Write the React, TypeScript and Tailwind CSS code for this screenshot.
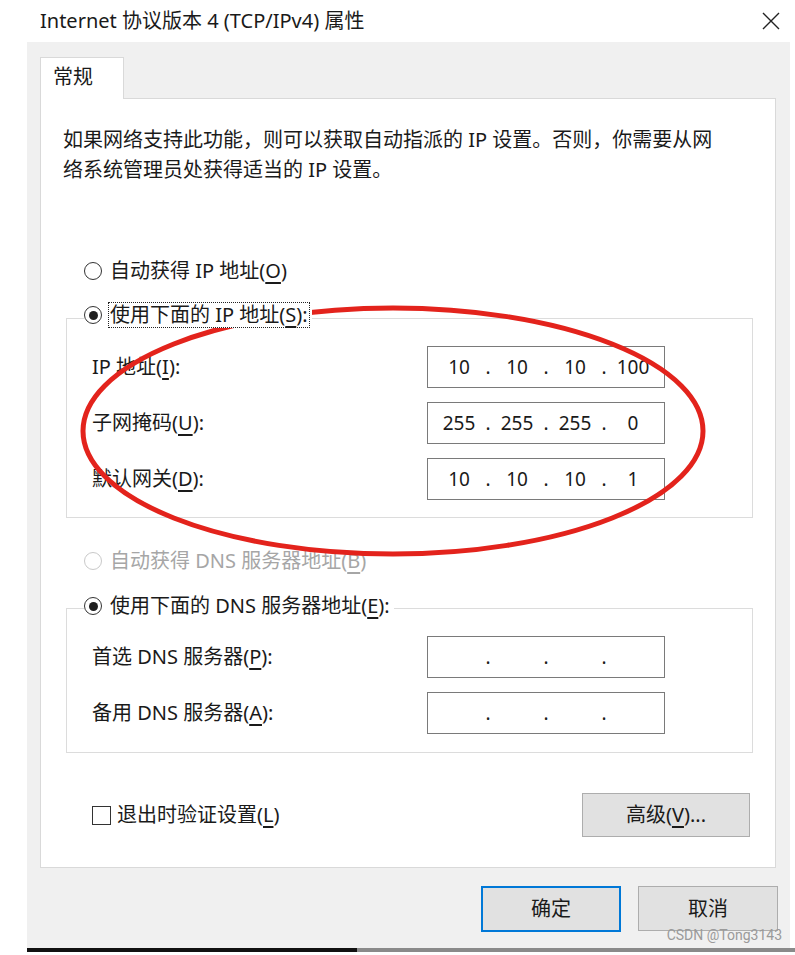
import React from "react";

const FONT = { fontFamily: '"Noto Sans", "Noto Sans CJK SC", sans-serif' };

function Radio({ checked, disabled }: { checked?: boolean; disabled?: boolean }) {
    return (
        <span
            className={`w-[18px] h-[18px] shrink-0 rounded-full border bg-white flex items-center justify-center ${
                disabled ? "border-[#c9c9c9]" : "border-[#333333]"
            }`}
        >
            {checked && <span className="w-[9px] h-[9px] rounded-full bg-[#1f1f1f]" />}
        </span>
    );
}

function IpBox({ parts }: { parts: string[] }) {
    return (
        <div className="w-[238px] h-[42px] border border-[#7a7a7a] bg-white flex items-center pl-[9px] text-[19px] text-[#1a1a1a] overflow-hidden">
            {parts.map((p, i) => (
                <React.Fragment key={i}>
                    {i > 0 && <span className="w-[14px] text-center">.</span>}
                    <span className="w-[44px] text-center">{p}</span>
                </React.Fragment>
            ))}
        </div>
    );
}

function Row({ label, hotkey, after, parts }: { label: string; hotkey: string; after?: string; parts: string[] }) {
    return (
        <div className="flex items-center h-[42px]">
            <div className="w-[360px] pl-[25px] text-[20px] text-[#1a1a1a]">
                {label}(<span className="underline underline-offset-4">{hotkey}</span>){after ?? ":"}
            </div>
            <IpBox parts={parts} />
        </div>
    );
}

export default function App() {
    return (
        <div className="w-[795px] h-[955px] bg-white relative overflow-hidden" style={FONT}>
            {/* title bar */}
            <div className="h-[42px] flex items-center justify-between pl-[40px] pr-[14px]">
                <span className="text-[20px] text-[#1a1a1a]">Internet 协议版本 4 (TCP/IPv4) 属性</span>
                <svg width="20" height="20" viewBox="0 0 20 20">
                    <path d="M2 2 L18 18 M18 2 L2 18" stroke="#222" strokeWidth="1.4" fill="none" />
                </svg>
            </div>

            {/* dialog body */}
            <div className="ml-[27px] w-[763px] h-[906px] bg-[#f0f0f0] pl-[13px] pt-[15px] relative">
                <div className="relative z-10 w-[84px] h-[42px] bg-white border border-b-0 border-[#d9d9d9] pl-[12px] pt-[4px] text-[20px] text-[#1a1a1a]">
                    常规
                </div>

                <div className="-mt-px w-[736px] h-[770px] bg-white border border-[#d9d9d9]">
                    <p className="pl-[22px] pt-[26px] text-[20px] leading-[30px] text-[#1a1a1a]">
                        如果网络支持此功能，则可以获取自动指派的 IP 设置。否则，你需要从网
                        <br />
                        络系统管理员处获得适当的 IP 设置。
                    </p>

                    <div className="mt-[73px] ml-[43px] h-[26px] flex items-center gap-[8px] text-[20px] text-[#1a1a1a]">
                        <Radio />
                        <span>
                            自动获得 IP 地址(<span className="underline underline-offset-4">O</span>)
                        </span>
                    </div>

                    <div className="mt-[18px] ml-[43px] relative z-10 w-fit h-[26px] flex items-center gap-[6px] bg-white pr-[2px] text-[20px] text-[#1a1a1a]">
                        <Radio checked />
                        <span className="border border-dotted border-[#222] px-[1px] leading-[24px]">
                            使用下面的 IP 地址(<span className="underline underline-offset-4">S</span>):
                        </span>
                    </div>

                    <div className="-mt-[10px] ml-[25px] w-[687px] h-[200px] border border-[#dcdcdc] pt-[27px] flex flex-col gap-[14px]">
                        <Row label="IP 地址" hotkey="I" parts={["10", "10", "10", "100"]} />
                        <Row label="子网掩码" hotkey="U" parts={["255", "255", "255", "0"]} />
                        <Row label="默认网关" hotkey="D" parts={["10", "10", "10", "1"]} />
                    </div>

                    <div className="mt-[30px] ml-[43px] h-[26px] flex items-center gap-[8px] text-[20px] text-[#a6a6a6]">
                        <Radio disabled />
                        <span>
                            自动获得 DNS 服务器地址(<span className="underline underline-offset-4">B</span>)
                        </span>
                    </div>

                    <div className="mt-[19px] ml-[43px] relative z-10 w-fit h-[26px] flex items-center gap-[8px] bg-white pr-[4px] text-[20px] text-[#1a1a1a]">
                        <Radio checked />
                        <span>
                            使用下面的 DNS 服务器地址(<span className="underline underline-offset-4">E</span>):
                        </span>
                    </div>

                    <div className="-mt-[11px] ml-[25px] w-[687px] h-[145px] border border-[#dcdcdc] pt-[27px] flex flex-col gap-[14px]">
                        <Row label="首选 DNS 服务器" hotkey="P" parts={["", "", "", ""]} />
                        <Row label="备用 DNS 服务器" hotkey="A" parts={["", "", "", ""]} />
                    </div>

                    <div className="mt-[40px] pl-[51px] pr-[25px] flex items-center justify-between">
                        <div className="flex items-center gap-[6px] text-[20px] text-[#1a1a1a]">
                            <span className="w-[19px] h-[19px] border border-[#333333] bg-white" />
                            <span>
                                退出时验证设置(<span className="underline underline-offset-4">L</span>)
                            </span>
                        </div>
                        <button className="w-[168px] h-[44px] bg-[#e1e1e1] border border-[#adadad] text-[20px] text-[#1a1a1a]">
                            高级(<span className="underline underline-offset-4">V</span>)...
                        </button>
                    </div>
                </div>

                {/* dialog buttons */}
                <div className="mt-[18px] pr-[12px] flex justify-end gap-[17px]">
                    <button className="w-[140px] h-[46px] bg-[#e1e1e1] border-2 border-[#0078d7] text-[20px] text-[#1a1a1a]">
                        确定
                    </button>
                    <button className="w-[140px] h-[45px] bg-[#e1e1e1] border border-[#adadad] text-[20px] text-[#1a1a1a]">
                        取消
                    </button>
                </div>

                <span className="absolute right-[8px] bottom-[2px] text-[14px] text-[#9a9a9a]" style={{ fontFamily: "Roboto, sans-serif" }}>
                    CSDN @Tong3143
                </span>
            </div>

            {/* taskbar edge */}
            <div className="flex h-[4px]">
                <div className="ml-[27px] w-[330px] bg-[#111111]" />
                <div className="flex-1 bg-[#8a8a8a]" />
            </div>

            {/* red annotation */}
            <svg className="absolute left-0 top-0 pointer-events-none" width="795" height="955">
                <ellipse cx="393" cy="431" rx="310" ry="123" fill="none" stroke="#e3231c" strokeWidth="5" />
            </svg>
        </div>
    );
}
